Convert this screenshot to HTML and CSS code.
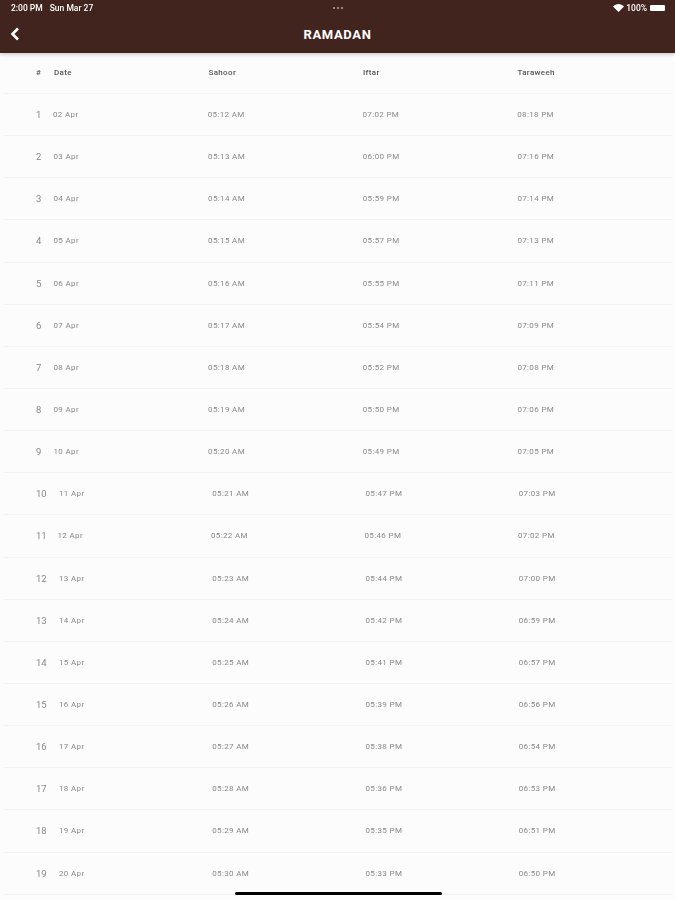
FILE: index.html
```html
<!DOCTYPE html>
<html lang="en">
<head>
  <meta charset="UTF-8" />
  <title>Ramadan</title>
  <link rel="stylesheet" href="styles.css">
</head>
<body>

<div class="topbar">
  <div class="status">
    <div class="status-left">
      <span>2:00 PM</span>
      <span>Sun Mar 27</span>
    </div>
    <div class="dots"><i></i><i></i><i></i></div>
    <div class="status-right">
      <svg class="wifi" width="11" height="8" viewBox="0 0 11 8"><path d="M5.5 8 0 2.6C3.1-.8 7.9-.8 11 2.6z" fill="#fff"/></svg>
      <span>100%</span>
      <div class="battery"></div>
    </div>
  </div>
  <div class="titlebar">
    <svg class="back" width="10" height="14" viewBox="0 0 10 14"><path d="M8 1.5 2.5 7 8 12.5" fill="none" stroke="#fff" stroke-width="2.6"/></svg>
    <h1>RAMADAN</h1>
  </div>
</div>

<div class="table">
  <div class="row head"><span class="num">#</span><span class="cell">Date</span><span class="cell">Sahoor</span><span class="cell">Iftar</span><span class="cell">Taraweeh</span></div>
  <div class="row narrow"><span class="num">1</span><span class="cell">02 Apr</span><span class="cell">05:12 AM</span><span class="cell">07:02 PM</span><span class="cell">08:18 PM</span></div>
  <div class="row"><span class="num">2</span><span class="cell">03 Apr</span><span class="cell">05:13 AM</span><span class="cell">06:00 PM</span><span class="cell">07:16 PM</span></div>
  <div class="row"><span class="num">3</span><span class="cell">04 Apr</span><span class="cell">05:14 AM</span><span class="cell">05:59 PM</span><span class="cell">07:14 PM</span></div>
  <div class="row"><span class="num">4</span><span class="cell">05 Apr</span><span class="cell">05:15 AM</span><span class="cell">05:57 PM</span><span class="cell">07:13 PM</span></div>
  <div class="row"><span class="num">5</span><span class="cell">06 Apr</span><span class="cell">05:16 AM</span><span class="cell">05:55 PM</span><span class="cell">07:11 PM</span></div>
  <div class="row"><span class="num">6</span><span class="cell">07 Apr</span><span class="cell">05:17 AM</span><span class="cell">05:54 PM</span><span class="cell">07:09 PM</span></div>
  <div class="row"><span class="num">7</span><span class="cell">08 Apr</span><span class="cell">05:18 AM</span><span class="cell">05:52 PM</span><span class="cell">07:08 PM</span></div>
  <div class="row"><span class="num">8</span><span class="cell">09 Apr</span><span class="cell">05:19 AM</span><span class="cell">05:50 PM</span><span class="cell">07:06 PM</span></div>
  <div class="row"><span class="num">9</span><span class="cell">10 Apr</span><span class="cell">05:20 AM</span><span class="cell">05:49 PM</span><span class="cell">07:05 PM</span></div>
  <div class="row wide"><span class="num">10</span><span class="cell">11 Apr</span><span class="cell">05:21 AM</span><span class="cell">05:47 PM</span><span class="cell">07:03 PM</span></div>
  <div class="row wide narrow"><span class="num">11</span><span class="cell">12 Apr</span><span class="cell">05:22 AM</span><span class="cell">05:46 PM</span><span class="cell">07:02 PM</span></div>
  <div class="row wide"><span class="num">12</span><span class="cell">13 Apr</span><span class="cell">05:23 AM</span><span class="cell">05:44 PM</span><span class="cell">07:00 PM</span></div>
  <div class="row wide"><span class="num">13</span><span class="cell">14 Apr</span><span class="cell">05:24 AM</span><span class="cell">05:42 PM</span><span class="cell">06:59 PM</span></div>
  <div class="row wide"><span class="num">14</span><span class="cell">15 Apr</span><span class="cell">05:25 AM</span><span class="cell">05:41 PM</span><span class="cell">06:57 PM</span></div>
  <div class="row wide"><span class="num">15</span><span class="cell">16 Apr</span><span class="cell">05:26 AM</span><span class="cell">05:39 PM</span><span class="cell">06:56 PM</span></div>
  <div class="row wide"><span class="num">16</span><span class="cell">17 Apr</span><span class="cell">05:27 AM</span><span class="cell">05:38 PM</span><span class="cell">06:54 PM</span></div>
  <div class="row wide"><span class="num">17</span><span class="cell">18 Apr</span><span class="cell">05:28 AM</span><span class="cell">05:36 PM</span><span class="cell">06:53 PM</span></div>
  <div class="row wide"><span class="num">18</span><span class="cell">19 Apr</span><span class="cell">05:29 AM</span><span class="cell">05:35 PM</span><span class="cell">06:51 PM</span></div>
  <div class="row wide"><span class="num">19</span><span class="cell">20 Apr</span><span class="cell">05:30 AM</span><span class="cell">05:33 PM</span><span class="cell">06:50 PM</span></div>
</div>

<div class="home-bar"></div>

</body>
</html>
```

FILE: styles.css
```css
body {
  margin: 0;
  height: 900px;
  overflow: hidden;
  position: relative;
  font-family: Roboto, sans-serif;
  background: #fcfcfc;
  color: #888;
}
.topbar {
  height: 53px;
  background: #42241f;
  color: #fff;
  box-shadow: 0 1px 4px rgba(0, 0, 0, 0.25);
  position: relative;
}
.status {
  height: 16px;
  padding: 0 10px 0 11px;
  display: flex;
  align-items: center;
  justify-content: space-between;
  font-size: 8.5px;
  font-weight: 500;
  filter: blur(0.3px);
}
.status-left { display: flex; gap: 7px; width: 100px; white-space: nowrap; }
.status-right { display: flex; align-items: center; gap: 2px; width: 100px; justify-content: flex-end; }
.dots { display: flex; gap: 2px; }
.dots i { width: 2px; height: 2px; border-radius: 50%; background: #b9aaa6; }
.battery { width: 15px; height: 6px; background: #fff; border-radius: 1px; margin-left: 1px; }
.titlebar {
  height: 37px;
  display: flex;
  align-items: center;
  justify-content: center;
  position: relative;
}
.back { position: absolute; left: 10px; top: 11px; }
h1 {
  margin: 0;
  font-size: 13px;
  font-weight: 700;
  letter-spacing: 0.65px;
}
.table { padding: 0 3px 0 4px; }
.row {
  height: 41.15px;
  border-bottom: 1px solid #f3f3f3;
  padding-left: 32px;
  display: flex;
  align-items: center;
  font-size: 8px;
  letter-spacing: 0.35px;
  filter: blur(0.35px);
}
.row.head { height: 38px; padding-bottom: 2px; color: #555; font-weight: 500; }
.num { width: 17.5px; font-size: 9.5px; letter-spacing: 0; }
.head .num { font-size: 8px; width: 18px; }
.narrow .num { width: 17px; }
.cell { width: 155px; }
.wide .num { width: 23px; }
.wide.narrow .num { width: 21.5px; }
.wide .cell { width: 153.5px; }
.home-bar {
  position: absolute;
  left: 235px;
  bottom: 5px;
  width: 207px;
  height: 3px;
  border-radius: 2px;
  background: #000;
}
```
